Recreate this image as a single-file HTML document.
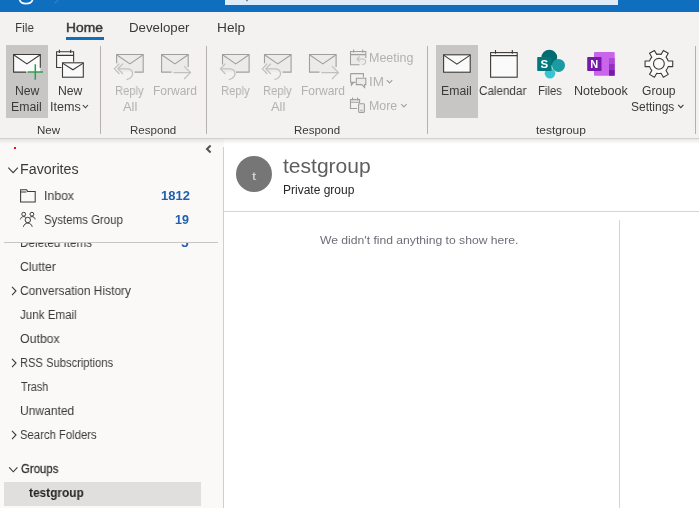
<!DOCTYPE html>
<html>
<head>
<meta charset="utf-8">
<title>Outlook</title>
<style>
html,body{margin:0;padding:0;}
body{width:699px;height:508px;overflow:hidden;position:relative;background:#f3f2f1;font-family:"Liberation Sans", sans-serif;}
.a{position:absolute;}
.t{position:absolute;white-space:nowrap;transform-origin:0 50%;will-change:transform;-webkit-font-smoothing:antialiased;}
svg{position:absolute;overflow:visible;}
</style>
</head>
<body>
<!-- title bar -->
<div class="a" style="left:0;top:0;width:699px;height:12px;background:#106ebe;"></div>
<div class="a" style="left:225px;top:0;width:393px;height:5px;background:#deecf9;"></div>
<!-- ribbon background -->
<div class="a" style="left:0;top:12px;width:699px;height:126px;background:#f3f2f1;"></div>
<!-- panes -->
<div class="a" style="left:0;top:139px;width:224px;height:369px;background:#faf9f8;"></div>
<div class="a" style="left:224px;top:139px;width:475px;height:369px;background:#ffffff;"></div>
<div class="a" style="left:0;top:138px;width:699px;height:1px;background:#d2d0ce;"></div>
<div class="a" style="left:0;top:139px;width:699px;height:5px;background:linear-gradient(rgba(0,0,0,0.09),rgba(0,0,0,0));"></div>
<!-- home tab underline -->
<div class="a" style="left:66px;top:37px;width:38px;height:3px;background:#106ebe;"></div>
<!-- selected ribbon buttons -->
<div class="a" style="left:6px;top:45px;width:42px;height:73px;background:#c8c6c4;"></div>
<div class="a" style="left:436px;top:45px;width:42px;height:73px;background:#c8c6c4;"></div>
<!-- ribbon group separators -->
<div class="a" style="left:100px;top:46px;width:1px;height:88px;background:#b3b0ad;"></div>
<div class="a" style="left:206px;top:46px;width:1px;height:88px;background:#b3b0ad;"></div>
<div class="a" style="left:427px;top:46px;width:1px;height:88px;background:#b3b0ad;"></div>
<div class="a" style="left:695px;top:46px;width:1px;height:88px;background:#b3b0ad;"></div>
<!-- pane dividers -->
<div class="a" style="left:223px;top:147px;width:1px;height:361px;background:#cfcfcf;"></div>
<div class="a" style="left:224px;top:211px;width:475px;height:1px;background:#d4d4d4;"></div>
<div class="a" style="left:619px;top:220px;width:1px;height:288px;background:#d4d4d4;"></div>
<!-- sidebar pieces -->
<div class="a" style="left:14px;top:147px;width:2px;height:2px;background:#f01020;"></div>
<div class="a" style="left:4px;top:482px;width:197px;height:23.5px;background:#e1dfdd;"></div>
<div class="a" style="left:0;top:243px;width:223px;height:8px;overflow:hidden;">
<span class="t" style="left:19.67px;top:-8.33px;font-size:12.5px;line-height:16px;color:#3b3a39;transform:scaleX(0.9342);">Deleted Items</span>
<span class="t" style="left:180.60px;top:-8.33px;font-size:12.5px;line-height:16px;font-weight:bold;color:#1f60b0;transform:scaleX(1.1000);">5</span>
</div>
<div class="a" style="left:4px;top:242px;width:214px;height:1px;background:#c8c6c4;"></div>
<!-- avatar -->
<div class="a" style="left:236px;top:156px;width:36px;height:36px;border-radius:18px;background:#767676;"></div>
<!-- text -->
<span class="t" style="left:14.50px;top:19.90px;font-size:13px;line-height:16px;color:#3b3a39;transform:scaleX(0.9050);">File</span>
<span class="t" style="left:65.54px;top:19.90px;font-size:13px;line-height:16px;-webkit-text-stroke:0.45px #3b3a39;color:#3b3a39;transform:scaleX(1.0647);">Home</span>
<span class="t" style="left:129.38px;top:19.90px;font-size:13px;line-height:16px;color:#3b3a39;transform:scaleX(1.0207);">Developer</span>
<span class="t" style="left:216.94px;top:19.90px;font-size:13px;line-height:16px;color:#3b3a39;transform:scaleX(1.0560);">Help</span>
<span class="t" style="left:14.58px;top:82.64px;font-size:12px;line-height:16px;color:#3b3a39;transform:scaleX(1.0174);">New</span>
<span class="t" style="left:11.38px;top:98.84px;font-size:12px;line-height:16px;color:#3b3a39;transform:scaleX(1.0214);">Email</span>
<span class="t" style="left:57.58px;top:82.64px;font-size:12px;line-height:16px;color:#3b3a39;transform:scaleX(1.0174);">New</span>
<span class="t" style="left:49.75px;top:98.84px;font-size:12px;line-height:16px;color:#3b3a39;transform:scaleX(1.0500);">Items</span>
<span class="t" style="left:114.67px;top:82.64px;font-size:12px;line-height:16px;color:#b3b1af;transform:scaleX(0.9333);">Reply</span>
<span class="t" style="left:123.00px;top:98.84px;font-size:12px;line-height:16px;color:#b3b1af;transform:scaleX(1.0769);">All</span>
<span class="t" style="left:152.60px;top:82.64px;font-size:12px;line-height:16px;color:#b3b1af;transform:scaleX(1.0000);">Forward</span>
<span class="t" style="left:220.67px;top:82.64px;font-size:12px;line-height:16px;color:#b3b1af;transform:scaleX(0.9333);">Reply</span>
<span class="t" style="left:262.67px;top:82.64px;font-size:12px;line-height:16px;color:#b3b1af;transform:scaleX(0.9333);">Reply</span>
<span class="t" style="left:271.00px;top:98.84px;font-size:12px;line-height:16px;color:#b3b1af;transform:scaleX(1.0769);">All</span>
<span class="t" style="left:300.61px;top:82.64px;font-size:12px;line-height:16px;color:#b3b1af;transform:scaleX(0.9905);">Forward</span>
<span class="t" style="left:369.16px;top:50.14px;font-size:12px;line-height:16px;color:#b3b1af;transform:scaleX(1.0390);">Meeting</span>
<span class="t" style="left:369.27px;top:74.04px;font-size:12px;line-height:16px;color:#b3b1af;transform:scaleX(1.1273);">IM</span>
<span class="t" style="left:369.37px;top:98.14px;font-size:12px;line-height:16px;color:#b3b1af;transform:scaleX(1.0308);">More</span>
<span class="t" style="left:441.38px;top:82.64px;font-size:12px;line-height:16px;color:#3b3a39;transform:scaleX(1.0214);">Email</span>
<span class="t" style="left:479.43px;top:82.64px;font-size:12px;line-height:16px;color:#3b3a39;transform:scaleX(0.9708);">Calendar</span>
<span class="t" style="left:538.06px;top:82.64px;font-size:12px;line-height:16px;color:#3b3a39;transform:scaleX(0.9417);">Files</span>
<span class="t" style="left:573.55px;top:82.64px;font-size:12px;line-height:16px;color:#3b3a39;transform:scaleX(1.0480);">Notebook</span>
<span class="t" style="left:641.59px;top:82.64px;font-size:12px;line-height:16px;color:#3b3a39;transform:scaleX(1.0062);">Group</span>
<span class="t" style="left:631.41px;top:98.84px;font-size:12px;line-height:16px;color:#3b3a39;transform:scaleX(0.9905);">Settings</span>
<span class="t" style="left:36.60px;top:121.62px;font-size:11.5px;line-height:16px;color:#3b3a39;transform:scaleX(1.0000);">New</span>
<span class="t" style="left:129.80px;top:121.62px;font-size:11.5px;line-height:16px;color:#3b3a39;transform:scaleX(1.0044);">Respond</span>
<span class="t" style="left:294.00px;top:121.62px;font-size:11.5px;line-height:16px;color:#3b3a39;transform:scaleX(1.0000);">Respond</span>
<span class="t" style="left:536.00px;top:121.62px;font-size:11.5px;line-height:16px;color:#3b3a39;transform:scaleX(1.0417);">testgroup</span>
<span class="t" style="left:19.58px;top:160.75px;font-size:14px;line-height:16px;color:#3b3a39;transform:scaleX(1.0179);">Favorites</span>
<span class="t" style="left:43.82px;top:187.67px;font-size:12.5px;line-height:16px;color:#3b3a39;transform:scaleX(0.9793);">Inbox</span>
<span class="t" style="left:43.88px;top:211.67px;font-size:12.5px;line-height:16px;color:#3b3a39;transform:scaleX(0.9153);">Systems Group</span>
<span class="t" style="left:160.76px;top:187.67px;font-size:12.5px;line-height:16px;font-weight:bold;color:#1f60b0;transform:scaleX(1.0385);">1812</span>
<span class="t" style="left:174.80px;top:211.67px;font-size:12.5px;line-height:16px;font-weight:bold;color:#1f60b0;transform:scaleX(1.0000);">19</span>
<span class="t" style="left:19.63px;top:258.67px;font-size:12.5px;line-height:16px;color:#3b3a39;transform:scaleX(0.9722);">Clutter</span>
<span class="t" style="left:19.64px;top:282.67px;font-size:12.5px;line-height:16px;color:#3b3a39;transform:scaleX(0.9565);">Conversation History</span>
<span class="t" style="left:20.00px;top:306.67px;font-size:12.5px;line-height:16px;color:#3b3a39;transform:scaleX(0.9267);">Junk Email</span>
<span class="t" style="left:19.62px;top:330.67px;font-size:12.5px;line-height:16px;color:#3b3a39;transform:scaleX(0.9846);">Outbox</span>
<span class="t" style="left:19.71px;top:354.67px;font-size:12.5px;line-height:16px;color:#3b3a39;transform:scaleX(0.8932);">RSS Subscriptions</span>
<span class="t" style="left:20.60px;top:378.67px;font-size:12.5px;line-height:16px;color:#3b3a39;transform:scaleX(0.8645);">Trash</span>
<span class="t" style="left:19.64px;top:402.67px;font-size:12.5px;line-height:16px;color:#3b3a39;transform:scaleX(0.9636);">Unwanted</span>
<span class="t" style="left:19.70px;top:426.67px;font-size:12.5px;line-height:16px;color:#3b3a39;transform:scaleX(0.9036);">Search Folders</span>
<span class="t" style="left:20.60px;top:460.67px;font-size:12.5px;line-height:16px;-webkit-text-stroke:0.3px #323130;color:#323130;transform:scaleX(0.9122);">Groups</span>
<span class="t" style="left:29.20px;top:485.27px;font-size:12.5px;line-height:16px;font-weight:bold;color:#252423;transform:scaleX(0.9509);">testgroup</span>
<span class="t" style="left:252.20px;top:168.02px;font-size:11.5px;line-height:16px;color:#dcdcdc;transform:scaleX(1.3333);">t</span>
<span class="t" style="left:282.60px;top:152.84px;font-size:19.5px;line-height:26px;color:#5e5e5e;transform:scaleX(1.0790);">testgroup</span>
<span class="t" style="left:282.81px;top:181.84px;font-size:12px;line-height:16px;color:#262626;transform:scaleX(0.9943);">Private group</span>
<span class="t" style="left:320.40px;top:231.52px;font-size:11.5px;line-height:16px;color:#6e6e78;transform:scaleX(1.0556);">We didn&#39;t find anything to show here.</span>

<!-- icons -->
<svg width="699" height="508" viewBox="0 0 699 508" style="left:0;top:0;">
<rect x="13.6" y="54.5" width="26.7" height="17.6" fill="#fafafa" stroke="none"/>
<path d="M26.2 72.1 H13.6 V54.5 H40.3 V67.8" fill="none" stroke="#3b3a39" stroke-width="1.1"/>
<path d="M13.6 54.8 L26.9 63.9 L40.3 54.8" fill="none" stroke="#3b3a39" stroke-width="1.1"/>
<path d="M27.5 72.1 H43 M35.3 64.3 V79.8" stroke="#2f9e4f" stroke-width="1.5" fill="none"/>
<rect x="56.6" y="51.8" width="17" height="15.8" fill="#fafafa"/>
<path d="M61.5 67.5 H56.6 V51.8 H73.6 V61.8 M56.6 55.4 H73.6 M59.4 49.8 V53 M70.7 49.8 V53" fill="none" stroke="#3b3a39" stroke-width="1.1"/>
<rect x="62.5" y="62.8" width="20.8" height="14.4" fill="#fafafa" stroke="#3b3a39" stroke-width="1.1"/>
<path d="M62.5 63.099999999999994 L72.9 69.8 L83.3 63.099999999999994" fill="none" stroke="#3b3a39" stroke-width="1.1"/>
<rect x="116.6" y="54.5" width="26.6" height="17.6" fill="#edebe9" stroke="none"/>
<path d="M116.6 63.3 V54.5 H143.2 V72.1 H134.6" fill="none" stroke="#a19f9d" stroke-width="1.1"/>
<path d="M116.6 54.8 L129.9 63.9 L143.2 54.8" fill="none" stroke="#a19f9d" stroke-width="1.1"/>
<path d="M119.4 63.6 L114.4 68.8 L119.4 74.0" fill="none" stroke="#c2c0be" stroke-width="1.2"/>
<path d="M123.0 63.6 L118.0 68.8 L123.0 74.0" fill="none" stroke="#c2c0be" stroke-width="1.2"/>
<path d="M118.5 68.8 H127.5 C132.1 68.8 133.5 72.8 132.1 75.8 C130.9 78.2 129.0 79.2 126.5 79.6" fill="none" stroke="#c2c0be" stroke-width="1.2"/>
<rect x="161.6" y="54.5" width="26.6" height="17.6" fill="#edebe9" stroke="none"/>
<path d="M171.6 72.1 H161.6 V54.5 H188.2 V66.9" fill="none" stroke="#a19f9d" stroke-width="1.1"/>
<path d="M161.6 54.8 L174.9 63.9 L188.2 54.8" fill="none" stroke="#a19f9d" stroke-width="1.1"/>
<path d="M173.4 72.6 H190.1 M184.1 66.2 L190.5 72.6 L184.1 79" fill="none" stroke="#c2c0be" stroke-width="1.2"/>
<rect x="222.5" y="54.5" width="26.6" height="17.6" fill="#edebe9" stroke="none"/>
<path d="M222.5 64.5 V54.5 H249.1 V72.1 H236.0" fill="none" stroke="#a19f9d" stroke-width="1.1"/>
<path d="M222.5 54.8 L235.8 63.9 L249.1 54.8" fill="none" stroke="#a19f9d" stroke-width="1.1"/>
<path d="M225.4 63.6 L220.4 68.8 L225.4 74.0" fill="none" stroke="#c2c0be" stroke-width="1.2"/>
<path d="M220.9 68.8 H229.9 C234.5 68.8 235.9 72.8 234.5 75.8 C233.3 78.2 231.4 79.2 228.9 79.6" fill="none" stroke="#c2c0be" stroke-width="1.2"/>
<rect x="264.5" y="54.5" width="26.6" height="17.6" fill="#edebe9" stroke="none"/>
<path d="M264.5 63.3 V54.5 H291.1 V72.1 H282.5" fill="none" stroke="#a19f9d" stroke-width="1.1"/>
<path d="M264.5 54.8 L277.8 63.9 L291.1 54.8" fill="none" stroke="#a19f9d" stroke-width="1.1"/>
<path d="M267.3 63.6 L262.3 68.8 L267.3 74.0" fill="none" stroke="#c2c0be" stroke-width="1.2"/>
<path d="M270.9 63.6 L265.9 68.8 L270.9 74.0" fill="none" stroke="#c2c0be" stroke-width="1.2"/>
<path d="M266.4 68.8 H275.4 C280.0 68.8 281.4 72.8 280.0 75.8 C278.8 78.2 276.9 79.2 274.4 79.6" fill="none" stroke="#c2c0be" stroke-width="1.2"/>
<rect x="309.5" y="54.5" width="26.6" height="17.6" fill="#edebe9" stroke="none"/>
<path d="M319.5 72.1 H309.5 V54.5 H336.1 V66.9" fill="none" stroke="#a19f9d" stroke-width="1.1"/>
<path d="M309.5 54.8 L322.8 63.9 L336.1 54.8" fill="none" stroke="#a19f9d" stroke-width="1.1"/>
<path d="M321.3 72.6 H338.0 M332.0 66.2 L338.4 72.6 L332.0 79" fill="none" stroke="#c2c0be" stroke-width="1.2"/>
<rect x="350.5" y="51.5" width="15.3" height="13.2" fill="#edebe9"/>
<path d="M359.5 64.7 H350.5 V51.5 H365.8 V58 M350.5 54.6 H365.8 M353.6 49.6 V52.6 M362.7 49.6 V52.6" fill="none" stroke="#a19f9d" stroke-width="1.1"/>
<path d="M359.6 56.3 L357 59 L359.6 61.7 M357.3 59 H363 C365.6 59 366.4 61.4 365.4 63 C364.8 64 363.8 64.6 362.4 64.8" fill="none" stroke="#c2c0be" stroke-width="1.1"/>
<path d="M350.6 73.6 H363.4 V77.6 M355.4 82.4 H353.6 L351.4 85.2 V82.4 H350.6 Z" fill="none" stroke="#a19f9d" stroke-width="1.1"/>
<path d="M350.6 73.6 V82.4" fill="none" stroke="#a19f9d" stroke-width="1.1"/>
<path d="M356.3 78.2 H365.8 V84.6 H364.6 V87.4 L361.6 84.6 H356.3 Z" fill="#edebe9" stroke="#a19f9d" stroke-width="1.1"/>
<path d="M357 108.5 H350.5 V99.6 H359.6 V103 M350.5 102.2 H359.6 M352.6 97.6 V100.6 M357.6 97.6 V100.6" fill="none" stroke="#a19f9d" stroke-width="1.1"/>
<rect x="358.6" y="103.8" width="5.8" height="8.6" rx="0.8" fill="#edebe9" stroke="#a19f9d" stroke-width="1.1"/>
<path d="M360.4 110.3 H362.6" stroke="#a19f9d" stroke-width="1"/>
<rect x="443.6" y="54.8" width="26.6" height="17.4" fill="#fafafa" stroke="none"/>
<rect x="443.6" y="54.8" width="26.6" height="17.4" fill="none" stroke="#3b3a39" stroke-width="1.1"/>
<path d="M443.6 55.1 L456.9 64.2 L470.2 55.1" fill="none" stroke="#3b3a39" stroke-width="1.1"/>
<rect x="490.6" y="52.6" width="26.6" height="24.6" fill="#fafafa" stroke="#3b3a39" stroke-width="1.1"/>
<path d="M490.6 55.6 H517.2 M495.5 50 V53.8 M512.3 50 V53.8" fill="none" stroke="#3b3a39" stroke-width="1.1"/>
<circle cx="549.3" cy="57.7" r="7.9" fill="#036c70"/>
<circle cx="558.5" cy="65.4" r="6.5" fill="#1a9ba1"/>
<circle cx="550" cy="73.2" r="5.3" fill="#37c6d0"/>
<rect x="537.2" y="56.9" width="14.4" height="14.2" rx="0.8" fill="#03787c"/>
<text x="544.4" y="68.3" font-family="Liberation Sans, sans-serif" font-weight="bold" font-size="11.5" fill="#ffffff" text-anchor="middle">S</text>
<rect x="594" y="52.1" width="20.7" height="23.6" rx="0.8" fill="#ca64ea"/>
<rect x="609" y="58" width="5.7" height="6" fill="#ae4bd5"/>
<rect x="609" y="64" width="5.7" height="5.8" fill="#9332bf"/>
<rect x="609" y="69.8" width="5.7" height="5.9" fill="#7719aa"/>
<rect x="587.2" y="56.9" width="14.3" height="14.2" rx="0.8" fill="#7719aa"/>
<text x="594.3" y="68.1" font-family="Liberation Sans, sans-serif" font-weight="bold" font-size="11" fill="#ffffff" text-anchor="middle">N</text>
<path d="M668.18 60.96 L672.72 60.99 L672.72 66.61 L668.18 66.64 A9.7 9.7 0 0 1 665.99 70.42 L668.24 74.36 L663.37 77.17 L661.08 73.25 A9.7 9.7 0 0 1 656.72 73.25 L654.43 77.17 L649.56 74.36 L651.81 70.42 A9.7 9.7 0 0 1 649.62 66.64 L645.08 66.61 L645.08 60.99 L649.62 60.96 A9.7 9.7 0 0 1 651.81 57.18 L649.56 53.24 L654.43 50.43 L656.72 54.35 A9.7 9.7 0 0 1 661.08 54.35 L663.37 50.43 L668.24 53.24 L665.99 57.18 A9.7 9.7 0 0 1 668.18 60.96 Z" fill="#fafafa" stroke="#3b3a39" stroke-width="1.1" stroke-linejoin="round"/>
<circle cx="658.9" cy="63.8" r="5.4" fill="#fafafa" stroke="#3b3a39" stroke-width="1.1"/>
<path d="M82.8 105 L85.40 107.8 L88 105" fill="none" stroke="#3b3a39" stroke-width="1.1"/>
<path d="M678.2 104.8 L680.80 107.6 L683.4 104.8" fill="none" stroke="#3b3a39" stroke-width="1.1"/>
<path d="M386.8 80.2 L389.50 83 L392.2 80.2" fill="none" stroke="#a19f9d" stroke-width="1.1"/>
<path d="M401.2 104.2 L403.90 107 L406.6 104.2" fill="none" stroke="#a19f9d" stroke-width="1.1"/>
<path d="M210.6 145.6 L207 149 L210.6 152.4" fill="none" stroke="#55534f" stroke-width="2"/>
<path d="M8.3 167.6 L13.1 172.6 L17.9 167.6" fill="none" stroke="#3b3a39" stroke-width="1.1"/>
<path d="M9.2 467.4 L13.3 471.8 L17.4 467.4" fill="none" stroke="#3b3a39" stroke-width="1.1"/>
<path d="M12 286.8 L16 291 L12 295.2" fill="none" stroke="#3b3a39" stroke-width="1.1"/>
<path d="M12 358.8 L16 363 L12 367.2" fill="none" stroke="#3b3a39" stroke-width="1.1"/>
<path d="M12 430.8 L16 435 L12 439.2" fill="none" stroke="#3b3a39" stroke-width="1.1"/>
<path d="M20.6 189.8 H26.6 L27.6 191.4 H35.2 V202 H20.6 Z M20.6 191.9 H26.4" fill="none" stroke="#3b3a39" stroke-width="1.05"/>
<circle cx="23.7" cy="214.2" r="1.9" fill="none" stroke="#3b3a39" stroke-width="1"/>
<circle cx="31.9" cy="214.2" r="1.9" fill="none" stroke="#3b3a39" stroke-width="1"/>
<circle cx="27.8" cy="220" r="2.7" fill="none" stroke="#3b3a39" stroke-width="1"/>
<path d="M20.4 219.4 C20.8 217.6 22 216.6 23.7 216.6 C24.6 216.6 25.2 216.9 25.8 217.4 M29.8 217.4 C30.4 216.9 31 216.6 31.9 216.6 C33.6 216.6 34.8 217.6 35.2 219.4 M23.4 226.8 C24 224.4 25.6 223.1 27.8 223.1 C30 223.1 31.6 224.4 32.2 226.8" fill="none" stroke="#3b3a39" stroke-width="1"/>
<path d="M19.6 0 C20.4 2.4 23 3.6 26 3.6 C29 3.6 31.8 2.4 32.6 0" fill="none" stroke="#ffffff" stroke-width="1.7"/>
<path d="M54.5 3.2 L58.5 0" fill="none" stroke="#3f8ad0" stroke-width="1"/>
<rect x="246.2" y="0" width="1.6" height="1.2" fill="#5f6f86"/>
</svg>
</body>
</html>
